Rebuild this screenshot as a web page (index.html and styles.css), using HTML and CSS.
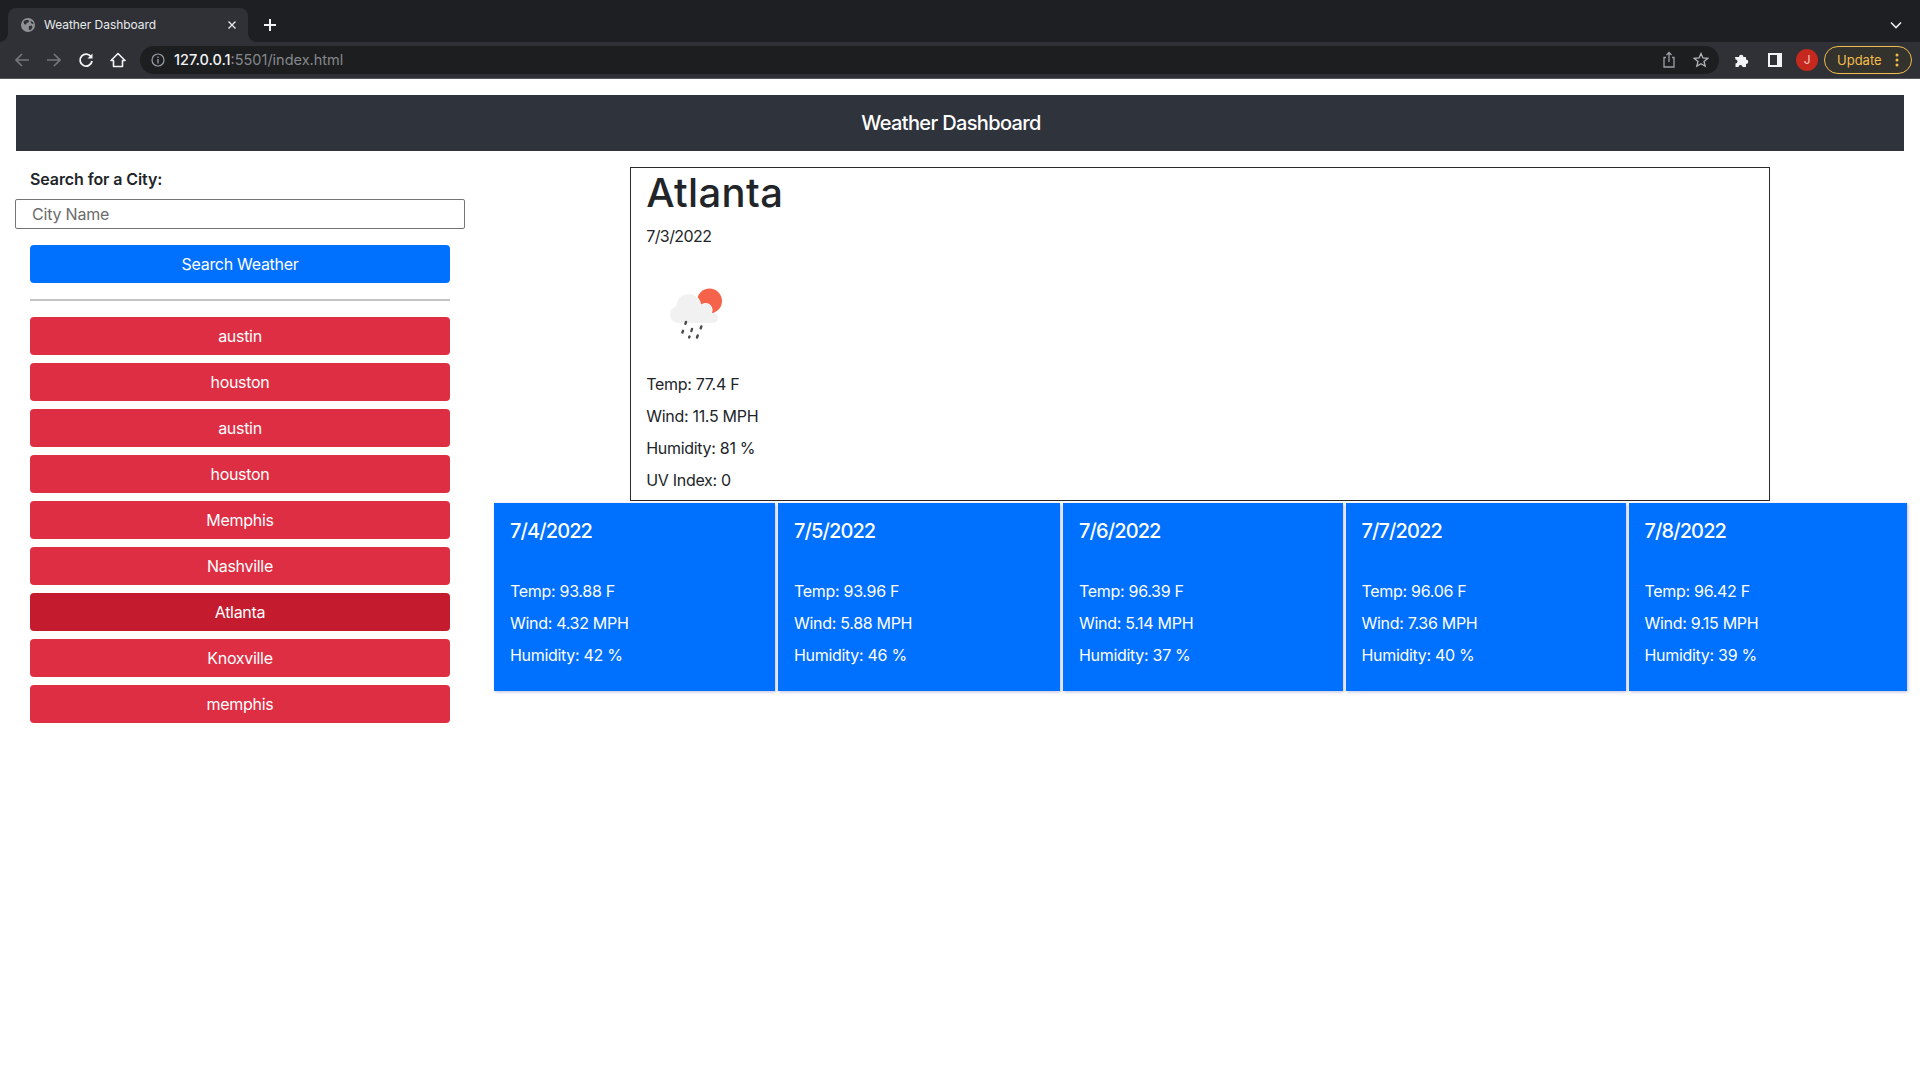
FILE: index.html
```html
<!DOCTYPE html>
<html>
  <head>
    <title>Weather Dashboard</title>
    <link rel="stylesheet" href="styles.css">
  </head>
  <body>
    <div class="browser">
      <div class="tabstrip">
        <div class="tab">
          <svg class="favicon" width="14" height="14" viewBox="0 0 16 16"><circle cx="8" cy="8" r="8" fill="#8f9194"/><path d="M3 3.500 L7 2 L9.500 3 L8.500 5 L6.500 5.500 L6 7.500 L3.500 7 Z M9 9 L12.500 8.500 L13 11 L10.500 14 L9 13 Z M11 3 L14 5 L14 7 L11.500 6 Z" fill="#2f3136"/></svg>
          <span class="tab-title">Weather Dashboard</span>
          <svg class="tab-close" width="8" height="8" viewBox="0 0 8 8"><path d="M0.500 0.500 L7.500 7.500 M7.500 0.500 L0.500 7.500" stroke="#e8eaed" stroke-width="1.300"/></svg>
        </div>
        <svg class="new-tab" width="14" height="14" viewBox="0 0 14 14"><path d="M7 1 V13 M1 7 H13" stroke="#f1f3f4" stroke-width="2"/></svg>
        <svg class="tab-menu" width="12" height="8" viewBox="0 0 12 8"><path d="M1 1.500 L6 6.500 L11 1.500" fill="none" stroke="#e8eaed" stroke-width="1.600"/></svg>
      </div>
      <div class="toolbar">
        <svg class="nav-icon" width="16" height="16" viewBox="0 0 16 16"><path d="M15 8 H2 M8 2 L2 8 L8 14" fill="none" stroke="#74767a" stroke-width="1.700"/></svg>
        <svg class="nav-icon" width="16" height="16" viewBox="0 0 16 16"><path d="M1 8 H14 M8 2 L14 8 L8 14" fill="none" stroke="#74767a" stroke-width="1.700"/></svg>
        <svg class="nav-icon" width="16" height="16" viewBox="0 0 16 16"><path d="M13.200 5 A6 6 0 1 0 14 9" fill="none" stroke="#f1f3f4" stroke-width="1.800"/><path d="M14.500 1.500 V6.500 H9.500 Z" fill="#f1f3f4"/></svg>
        <svg class="nav-icon" width="16" height="16" viewBox="0 0 16 16"><path d="M8 1.500 L15 8.500 H12.500 V14.500 H3.500 V8.500 H1 Z" fill="none" stroke="#f1f3f4" stroke-width="1.600" stroke-linejoin="round"/></svg>
        <div class="omnibox">
          <svg width="14" height="14" viewBox="0 0 14 14"><circle cx="7" cy="7" r="6" fill="none" stroke="#9aa0a6" stroke-width="1.200"/><path d="M7 6 V10.500 M7 3.400 V5" stroke="#9aa0a6" stroke-width="1.300"/></svg>
          <span class="url"><span class="url-host">127.0.0.1</span>:5501/index.html</span>
          <svg class="omni-share" width="14" height="18" viewBox="0 0 14 18"><path d="M4 6.500 H2 V16 H12 V6.500 H10 M7 11 V1.500 M4.500 4 L7 1.500 L9.500 4" fill="none" stroke="#9aa0a6" stroke-width="1.300"/></svg>
          <svg class="omni-star" width="16" height="16" viewBox="0 0 16 16"><path d="M8 1.600 L9.900 6 L14.700 6.400 L11 9.500 L12.200 14.200 L8 11.700 L3.800 14.200 L5 9.500 L1.300 6.400 L6.100 6 Z" fill="none" stroke="#b4b7ba" stroke-width="1.300"/></svg>
        </div>
        <svg class="ext-icon" width="16" height="16" viewBox="0 0 16 16"><path d="M1 5 H5 A2.200 2.200 0 1 1 9.400 5 H12 V7.500 A2.200 2.200 0 1 1 12 12 V15 H8.500 A2 2 0 1 0 4.500 15 H1.500 V11.500 A2 2 0 1 0 1.500 7.500 Z" fill="#f1f3f4"/></svg>
        <svg class="side-icon" width="14" height="14" viewBox="0 0 14 14"><rect width="14" height="14" fill="#f1f3f4"/><rect x="2" y="2" width="7" height="10" fill="#2f3136"/></svg>
        <div class="avatar">J</div>
        <div class="update">
          <span>Update</span>
          <svg width="4" height="14" viewBox="0 0 4 14"><circle cx="2" cy="2" r="1.500" fill="#f3bd4c"/><circle cx="2" cy="7" r="1.500" fill="#f3bd4c"/><circle cx="2" cy="12" r="1.500" fill="#f3bd4c"/></svg>
        </div>
      </div>
    </div>

    <div class="page">
      <header class="banner">Weather Dashboard</header>
      <div class="content">
        <aside class="sidebar">
          <label class="search-label" for="city">Search for a City:</label>
          <input class="search-input" id="city" type="text" placeholder="City Name">
          <button class="btn btn-blue btn-search">Search Weather</button>
          <hr class="divider">
          <div class="history">
            <button class="btn btn-red">austin</button>
            <button class="btn btn-red">houston</button>
            <button class="btn btn-red">austin</button>
            <button class="btn btn-red">houston</button>
            <button class="btn btn-red">Memphis</button>
            <button class="btn btn-red">Nashville</button>
            <button class="btn btn-red active">Atlanta</button>
            <button class="btn btn-red">Knoxville</button>
            <button class="btn btn-red">memphis</button>
          </div>
        </aside>
        <main class="results">
          <section class="today">
            <h1 class="today-city">Atlanta</h1>
            <p class="stat stat-date">7/3/2022</p>
            <svg class="weather-icon" width="100" height="100" viewBox="0 0 100 100">
              <circle cx="64.500" cy="37" r="12.500" fill="#f4634a"/>
              <circle cx="43.500" cy="42" r="12.600" fill="#fff"/>
              <circle cx="60.500" cy="46" r="7.100" fill="#fff"/>
              <circle cx="43.500" cy="42" r="12" fill="#f1f1f1"/>
              <circle cx="60.500" cy="46" r="6.500" fill="#f1f1f1"/>
              <rect x="25" y="42" width="36" height="17" rx="8.500" fill="#f1f1f1"/>
              <rect x="50" y="49" width="23" height="10" rx="5" fill="#f1f1f1"/>
              <path d="M41 58 L40.400 59.800 M56.300 62.500 L55.700 64.300 M47 65 L46.400 67 M38 66.800 L37.400 68.600 M44.500 72.500 L44.100 73.500 M52.700 71.500 L52 73.500" stroke="#4a4a4a" stroke-width="2.400" stroke-linecap="round"/>
            </svg>
            <p class="stat">Temp: 77.4 F</p>
            <p class="stat">Wind: 11.5 MPH</p>
            <p class="stat">Humidity: 81 %</p>
            <p class="stat">UV Index: 0</p>
          </section>
          <section class="forecast">
            <article class="card">
              <h5 class="card-date">7/4/2022</h5>
              <p class="stat">Temp: 93.88 F</p>
              <p class="stat">Wind: 4.32 MPH</p>
              <p class="stat">Humidity: 42 %</p>
            </article>
            <article class="card">
              <h5 class="card-date">7/5/2022</h5>
              <p class="stat">Temp: 93.96 F</p>
              <p class="stat">Wind: 5.88 MPH</p>
              <p class="stat">Humidity: 46 %</p>
            </article>
            <article class="card">
              <h5 class="card-date">7/6/2022</h5>
              <p class="stat">Temp: 96.39 F</p>
              <p class="stat">Wind: 5.14 MPH</p>
              <p class="stat">Humidity: 37 %</p>
            </article>
            <article class="card">
              <h5 class="card-date">7/7/2022</h5>
              <p class="stat">Temp: 96.06 F</p>
              <p class="stat">Wind: 7.36 MPH</p>
              <p class="stat">Humidity: 40 %</p>
            </article>
            <article class="card">
              <h5 class="card-date">7/8/2022</h5>
              <p class="stat">Temp: 96.42 F</p>
              <p class="stat">Wind: 9.15 MPH</p>
              <p class="stat">Humidity: 39 %</p>
            </article>
          </section>
        </main>
      </div>
    </div>
  </body>
</html>
```

FILE: styles.css
```css
* {
  box-sizing: border-box;
}
body {
  margin: 0;
  background: #fff;
  color: #212529;
  font-family: Inter, "Liberation Sans", sans-serif;
  font-size: 16px;
  line-height: 24px;
  letter-spacing: -0.3px;
  overflow: hidden;
}

/* browser frame */
.browser {
  height: 79px;
  background: #2f3136;
  border-bottom: 1px solid #54565a;
}
.tabstrip {
  display: flex;
  align-items: center;
  height: 42px;
  padding: 8px 16px 0 8px;
  background: #1e1f22;
}
.tab {
  position: relative;
  display: flex;
  align-items: center;
  width: 240px;
  height: 34px;
  padding: 0 12px 0 13px;
  background: #2f3136;
  border-radius: 8px 8px 0 0;
  color: #e8eaed;
  font-size: 12px;
  letter-spacing: -0.05px;
}
.tab::before,
.tab::after {
  content: "";
  position: absolute;
  bottom: 0;
  width: 8px;
  height: 8px;
}
.tab::before {
  left: -8px;
  background: radial-gradient(circle at 0 0, #1e1f22 7.500px, #2f3136 8px);
}
.tab::after {
  right: -8px;
  background: radial-gradient(circle at 100% 0, #1e1f22 7.500px, #2f3136 8px);
}
.favicon {
  margin-right: 9px;
}
.tab-title {
  flex: 1;
}
.new-tab {
  margin: 0 0 0 15px;
}
.tab-menu {
  margin-left: auto;
  margin-right: 2px;
}
.toolbar {
  display: flex;
  align-items: center;
  height: 36px;
  padding: 0 8px 0 14px;
}
.nav-icon {
  margin-right: 16px;
}
.nav-icon:nth-child(4) {
  margin-right: 14px;
}
.omnibox {
  display: flex;
  flex: 1;
  align-items: center;
  height: 28px;
  padding: 0 10px 0 11px;
  background: #1d1e20;
  border-radius: 14px;
}
.url {
  flex: 1;
  margin-left: 9px;
  color: #85888c;
  font-size: 14.500px;
  letter-spacing: 0;
}
.url-host {
  color: #f1f3f4;
  font-weight: 500;
}
.omni-share {
  margin-right: 17px;
}
.ext-icon {
  margin-left: 15px;
}
.side-icon {
  margin-left: 18px;
}
.avatar {
  width: 22px;
  height: 22px;
  margin-left: 14px;
  border-radius: 50%;
  background: #c5281c;
  color: #f4c7c3;
  font-size: 12px;
  line-height: 22px;
  text-align: center;
}
.update {
  display: flex;
  align-items: center;
  justify-content: space-between;
  width: 88px;
  height: 28px;
  margin-left: 6px;
  padding: 0 12px 0 12px;
  border: 1px solid #f3bd4c;
  border-radius: 14px;
  background: #33322c;
  color: #f3bd4c;
  font-size: 13px;
  letter-spacing: 0;
}

/* page */
.page {
  padding: 16px 14px 0 16px;
}
.banner {
  height: 56px;
  margin-right: 2px;
  padding-right: 18px;
  background: #2f333c;
  color: #fff;
  font-size: 20px;
  font-weight: 500;
  letter-spacing: -0.65px;
  line-height: 56px;
  text-align: center;
}
.content {
  display: flex;
}
.sidebar {
  display: flex;
  flex: none;
  flex-direction: column;
  width: 479px;
  margin-left: -1px;
  padding-top: 16px;
}
.search-label {
  margin: 0 0 8px 15px;
  width: 450px;
  font-weight: 600;
  letter-spacing: -0.1px;
}
.search-input {
  width: 450px;
  height: 30px;
  padding: 0 16px;
  border: 1px solid #757575;
  border-radius: 2px;
  background: #fff;
  color: #212529;
  font-family: inherit;
  font-size: 16px;
  letter-spacing: -0.2px;
}
.search-input::placeholder {
  color: #6c6c6c;
  opacity: 1;
}
.btn {
  display: block;
  width: 420px;
  height: 38px;
  margin-left: 15px;
  border: 0;
  border-radius: 4px;
  color: #fff;
  font-family: inherit;
  font-size: 16px;
  letter-spacing: -0.3px;
  text-align: center;
}
.btn-blue {
  background: #0070fe;
}
.btn-search {
  margin-top: 16px;
}
.btn-red {
  background: #de2e43;
}
.btn-red.active {
  background: #c51b2f;
}
.divider {
  width: 420px;
  height: 2px;
  margin: 16px 0 16px 15px;
  border: 0;
  background: #c4c4c4;
}
.history {
  display: flex;
  flex-direction: column;
  gap: 8px;
}
.results {
  flex: 1;
  padding-top: 16px;
}
.today {
  width: 1140px;
  height: 334px;
  margin: 0 auto 2px;
  padding: 1px 15px 0;
  border: 1px solid #2b2b2b;
}
.today-city {
  margin: 0 0 7px;
  font-size: 40px;
  font-weight: 500;
  letter-spacing: 0.35px;
  line-height: 48px;
}
.stat {
  margin: 0 0 8px;
}
.stat-date {
  letter-spacing: -0.6px;
}
.weather-icon {
  display: block;
  margin: 16px 0 8px -1px;
}
.forecast {
  display: grid;
  grid-template-columns: 281px 282px 279.500px 280px 278px;
  gap: 3px;
}
.card {
  height: 188px;
  padding: 16px;
  background: #0070fe;
  color: #fff;
  box-shadow: 1px 1px 3px rgba(60, 60, 160, 0.35);
}
.card-date {
  margin: 0 0 36px;
  font-size: 20px;
  font-weight: 500;
  letter-spacing: -0.9px;
  line-height: 24px;
}
```
